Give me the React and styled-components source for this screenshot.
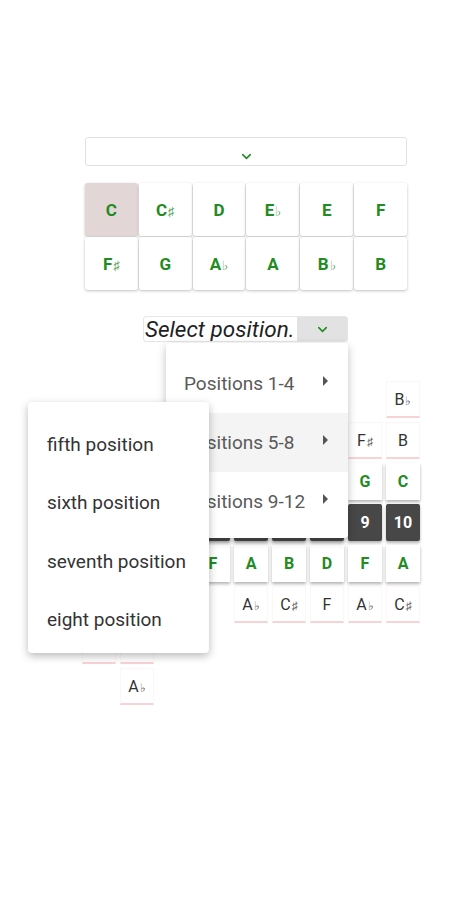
import React from 'react';
import styled, { createGlobalStyle } from 'styled-components';
import { ChevronDown } from 'lucide-react';

const GlobalStyle = createGlobalStyle`
  html, body {
    margin: 0;
    padding: 0;
    background: #ffffff;
    font-family: Roboto, "Noto Sans", "Liberation Sans", sans-serif;
  }
`;

const keys = [
  ['C', ''], ['C', '♯'], ['D', ''], ['E', '♭'], ['E', ''], ['F', ''],
  ['F', '♯'], ['G', ''], ['A', '♭'], ['A', ''], ['B', '♭'], ['B', ''],
];

// each row of the board, 10 frets; e = empty, p = plain note, g = scale note, f = fret
// cells hidden under the open menus carry no label
const board = [
  [['e'], ['e'], ['e'], ['e'], ['e'], ['e'], ['e'], ['e'], ['e'], ['p', 'B', '♭']],
  [['e'], ['e'], ['e'], ['e'], ['e'], ['e'], ['e'], ['e'], ['p', 'F', '♯'], ['p', 'B']],
  [['e'], ['e'], ['e'], ['e'], ['e'], ['e'], ['e'], ['e'], ['g', 'G'], ['g', 'C']],
  [['f'], ['f'], ['f'], ['f'], ['f'], ['f'], ['f'], ['f'], ['f', '9'], ['f', '10']],
  [['e'], ['e'], ['g'], ['g'], ['g', 'F'], ['g', 'A'], ['g', 'B'], ['g', 'D'], ['g', 'F'], ['g', 'A']],
  [['e'], ['e'], ['p'], ['p'], ['e'], ['p', 'A', '♭'], ['p', 'C', '♯'], ['p', 'F'], ['p', 'A', '♭'], ['p', 'C', '♯']],
  [['e'], ['p'], ['p'], ['e'], ['e'], ['e'], ['e'], ['e'], ['e'], ['e']],
  [['e'], ['e'], ['p', 'A', '♭'], ['e'], ['e'], ['e'], ['e'], ['e'], ['e'], ['e']],
];

const groups = ['Positions 1-4', 'Positions 5-8', 'Positions 9-12'];
const positions = ['fifth position', 'sixth position', 'seventh position', 'eight position'];

const Note = ({ name, acc }) => (
  <>
    {name}
    {acc && <Acc>{acc}</Acc>}
  </>
);

const App = () => (
  <Page>
    <GlobalStyle />
    <Column>
      <KeySelect>
        <ChevronDown size={15} strokeWidth={2.5} color="#228b22" />
      </KeySelect>
      <KeyGrid>
        {keys.map(([n, a], i) => (
          <KeyButton key={i} selected={i === 0}>
            <Note name={n} acc={a} />
          </KeyButton>
        ))}
      </KeyGrid>
      <PositionSelect>
        <SelectText>Select position.</SelectText>
        <SelectArrow>
          <ChevronDown size={15} strokeWidth={2.5} color="#228b22" />
        </SelectArrow>
        <Menu>
          {groups.map((g, i) => (
            <MenuItem key={g} active={i === 1}>
              {g}
              <Caret />
              {i === 1 && (
                <SubMenu>
                  {positions.map((p) => (
                    <SubItem key={p}>{p}</SubItem>
                  ))}
                </SubMenu>
              )}
            </MenuItem>
          ))}
        </Menu>
      </PositionSelect>
    </Column>
    <Board>
      {board.map((row, r) =>
        row.map(([kind, n, a], c) => (
          <Cell key={`${r}-${c}`} kind={kind}>
            {kind === 'f' ? n : n && <Note name={n} acc={a} />}
          </Cell>
        )),
      )}
    </Board>
  </Page>
);

export default App;

const Page = styled.div`
  width: 450px;
  min-height: 900px;
  padding-top: 137px;
  box-sizing: border-box;
`;

const Column = styled.div`
  width: 322px;
  margin-left: 85px;
  display: flex;
  flex-direction: column;
  align-items: center;
`;

const KeySelect = styled.div`
  width: 100%;
  height: 29px;
  box-sizing: border-box;
  border: 1px solid #e2e2e2;
  border-radius: 3px;
  display: flex;
  justify-content: center;
  align-items: flex-end;
  padding-bottom: 1px;
`;

const KeyGrid = styled.div`
  width: 100%;
  margin-top: 17px;
  display: grid;
  grid-template-columns: repeat(6, 1fr);
  grid-auto-rows: 53px;
  gap: 1px;
`;

const KeyButton = styled.div`
  display: flex;
  align-items: center;
  justify-content: center;
  background: ${(p) => (p.selected ? '#e3d6d6' : '#ffffff')};
  border-radius: 3px;
  box-shadow: 0 1px 3px rgba(0, 0, 0, 0.25);
  color: #228b22;
  font-size: 17px;
  font-weight: 700;
`;

const Acc = styled.span`
  font-size: 0.75em;
  font-weight: 400;
  opacity: 0.8;
  margin-left: 1px;
  position: relative;
  top: 2px;
`;

const PositionSelect = styled.div`
  position: relative;
  margin-top: 26px;
  margin-right: 1px;
  width: 205px;
  height: 26px;
  box-sizing: border-box;
  border: 1px solid #e6e6e6;
  border-radius: 3px;
  display: flex;
  align-items: stretch;
`;

const SelectText = styled.div`
  flex: 1;
  font-style: italic;
  font-size: 22.5px;
  line-height: 24px;
  color: #1f1f1f;
  padding-left: 1px;
  white-space: nowrap;
  overflow: hidden;
`;

const SelectArrow = styled.div`
  width: 50px;
  flex-shrink: 0;
  background: #e2e2e2;
  display: flex;
  align-items: center;
  justify-content: center;
`;

const Menu = styled.div`
  position: absolute;
  top: calc(100% + 2px);
  left: 22px;
  width: 182px;
  padding: 11px 0 7px;
  background: #ffffff;
  border-radius: 4px;
  box-shadow: 0 3px 8px rgba(0, 0, 0, 0.25);
  z-index: 10;
`;

const MenuItem = styled.div`
  position: relative;
  height: 59px;
  display: flex;
  align-items: center;
  padding-left: 18px;
  font-size: 19px;
  color: #5a5a5a;
  white-space: nowrap;
  background: ${(p) => (p.active ? '#f4f4f4' : 'transparent')};
`;

const Caret = styled.span`
  position: absolute;
  left: 157px;
  top: 22px;
  width: 0;
  height: 0;
  border-top: 5px solid transparent;
  border-bottom: 5px solid transparent;
  border-left: 5px solid #555;
`;

const SubMenu = styled.div`
  position: absolute;
  top: -11px;
  left: -138px;
  width: 181px;
  padding: 13px 0 4px;
  background: #ffffff;
  border-radius: 4px;
  box-shadow: 0 3px 8px rgba(0, 0, 0, 0.28);
  z-index: 20;
`;

const SubItem = styled.div`
  height: 58.5px;
  display: flex;
  align-items: center;
  padding-left: 19px;
  font-size: 19px;
  color: #333333;
  white-space: nowrap;
`;

const Board = styled.div`
  margin-left: 44px;
  margin-top: 39px;
  width: 376px;
  display: grid;
  grid-template-columns: repeat(10, 34px);
  grid-auto-rows: 37px;
  gap: 4px;
`;

const cellBg = { e: 'transparent', p: '#ffffff', g: '#ffffff', f: '#474747' };
const cellColor = { e: '#333', p: '#333333', g: '#228b22', f: '#ffffff' };

const Cell = styled.div`
  display: flex;
  align-items: center;
  justify-content: center;
  box-sizing: border-box;
  font-size: 16px;
  font-weight: ${(p) => (p.kind === 'p' ? 400 : 700)};
  background: ${(p) => cellBg[p.kind]};
  color: ${(p) => cellColor[p.kind]};
  border-radius: ${(p) => (p.kind === 'f' ? '2px' : '0')};
  border: ${(p) => (p.kind === 'p' ? '1px solid #fdf6f6' : 'none')};
  border-bottom: ${(p) => (p.kind === 'p' ? '2px solid #f7d3d6' : 'none')};
  box-shadow: ${(p) =>
    p.kind === 'g' || p.kind === 'f' ? '0 2px 3px rgba(0, 0, 0, 0.3)' : 'none'};
`;
